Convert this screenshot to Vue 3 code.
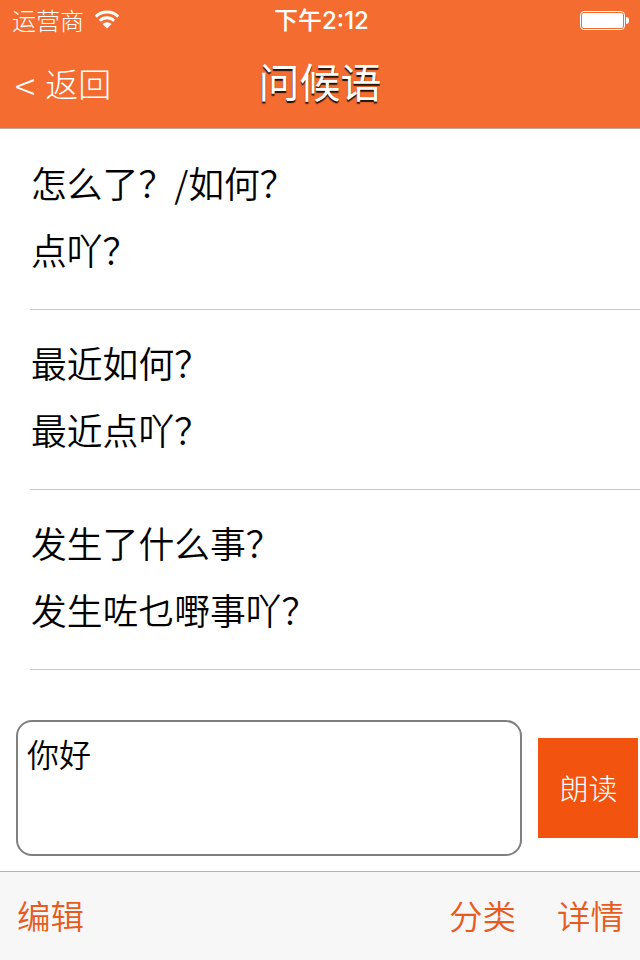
<template>
  <div class="screen">
    <header class="header">
      <div class="status">
        <div class="carrier">
          <span>运营商</span>
          <svg class="wifi" width="26" height="20" viewBox="0 0 26 20">
            <path d="M1.8 6.6a15.8 15.8 0 0 1 22.4 0" />
            <path d="M5.8 10.8a10.2 10.2 0 0 1 14.4 0" />
            <path class="dot" d="M13 18.6l-4.6-4.5a6.5 6.5 0 0 1 9.2 0z" />
          </svg>
        </div>
        <span class="time">下午2:12</span>
        <div class="battery">
          <div class="battery-body"><div class="battery-level"></div></div>
          <div class="battery-cap"></div>
        </div>
      </div>
      <div class="nav">
        <button class="back"><span class="arrow">&lt;</span><span>返回</span></button>
        <h1 class="title">问候语</h1>
      </div>
    </header>

    <ul class="list">
      <li v-for="item in phrases" :key="item.cantonese" class="row">
        <p>{{ item.mandarin }}</p>
        <p>{{ item.cantonese }}</p>
      </li>
    </ul>

    <div class="composer">
      <textarea v-model="text" class="input" spellcheck="false"></textarea>
      <button class="speak">朗读</button>
    </div>

    <footer class="toolbar">
      <button>编辑</button>
      <div class="actions">
        <button>分类</button>
        <button>详情</button>
      </div>
    </footer>
  </div>
</template>

<script setup>
import { ref } from 'vue'

const text = ref('你好')

const phrases = [
  { mandarin: '怎么了？/如何？', cantonese: '点吖？' },
  { mandarin: '最近如何？', cantonese: '最近点吖？' },
  { mandarin: '发生了什么事？', cantonese: '发生咗乜嘢事吖？' },
]
</script>

<style>
body {
  background: #fff;
}
</style>

<style scoped>
.screen {
  display: flex;
  flex-direction: column;
  width: 640px;
  height: 960px;
  overflow: hidden;
  background: #fff;
  color: #000;
  font-family: "Noto Sans CJK SC", sans-serif;
  font-weight: 350;
}

button {
  padding: 0;
  border: 0;
  background: none;
  color: inherit;
  font: inherit;
  white-space: nowrap;
}

.header {
  box-sizing: border-box;
  height: 129px;
  border-bottom: 1px solid #bea79d;
  background: #f46c30;
  color: #fff;
}

/* 状态栏 */
.status {
  display: grid;
  grid-template-columns: 1fr auto 1fr;
  grid-template-rows: 40px;
  align-items: center;
  height: 40px;
  padding: 0 11px 0 12px;
  font-size: 24px;
  line-height: 38px;
}
.carrier {
  display: flex;
  align-items: center;
  gap: 10px;
  font-weight: 300;
}
.wifi {
  fill: none;
  stroke: #fff;
  stroke-width: 3;
}
.wifi .dot {
  fill: #fff;
  stroke: none;
}
.time {
  padding: 2px 0 0 2px;
  font-family: Inter, "Noto Sans CJK SC", sans-serif;
  font-weight: 500;
}
.battery {
  display: flex;
  align-items: center;
  justify-self: end;
  gap: 1px;
}
.battery-body {
  box-sizing: border-box;
  width: 45px;
  height: 19px;
  padding: 1px;
  border: 1px solid #fff;
  border-radius: 4px;
}
.battery-level {
  height: 100%;
  border-radius: 2px;
  background: #fff;
}
.battery-cap {
  width: 3px;
  height: 7px;
  border-radius: 0 3px 3px 0;
  background: #fff;
}

/* 导航栏 */
.nav {
  display: grid;
  grid-template-columns: 1fr auto 1fr;
  height: 88px;
  padding: 0 15px;
}
.back {
  display: flex;
  justify-self: start;
  height: 88px;
  gap: 10px;
  font-size: 33px;
  font-weight: 300;
  line-height: 87px;
}
.arrow {
  font-size: 38px;
  line-height: 89px;
}
.title {
  margin: 0;
  font-size: 41px;
  font-weight: 400;
  line-height: 80px;
  text-shadow: 0 2px 1px rgba(0, 0, 0, 0.85);
}

/* 短语列表 */
.list {
  flex: 1;
  margin: 0;
  padding: 0 0 0 30px;
  list-style: none;
}
.row {
  box-sizing: border-box;
  height: 180px;
  padding: 19px 0 0 1px;
  border-bottom: 1px solid #c8c8c8;
}
.row:first-child {
  height: 181px;
  padding-top: 20px;
}
.row p {
  margin: 0;
  font-size: 35.8px;
  line-height: 67px;
}

/* 输入区 */
.composer {
  display: flex;
  align-items: center;
  gap: 16px;
  padding: 0 2px 15px 16px;
}
.input {
  box-sizing: border-box;
  flex: 1;
  height: 136px;
  padding: 7px 9px;
  border: 2px solid #808080;
  border-radius: 16px;
  outline: none;
  resize: none;
  background: #fff;
  color: #000;
  font: inherit;
  font-size: 32px;
  line-height: 48px;
}
.speak {
  width: 100px;
  height: 100px;
  padding: 0 0 3px 1px;
  background: #f2530e;
  color: #fff;
  font-size: 29px;
  font-weight: 300;
}

/* 底部工具栏 */
.toolbar {
  box-sizing: border-box;
  display: flex;
  justify-content: space-between;
  height: 89px;
  padding: 0 16px 3px 17px;
  border-top: 1px solid #b2b2b2;
  background: #f7f7f7;
  color: #e75b1e;
  font-size: 33.5px;
}
.actions {
  display: flex;
  gap: 41px;
}
</style>
